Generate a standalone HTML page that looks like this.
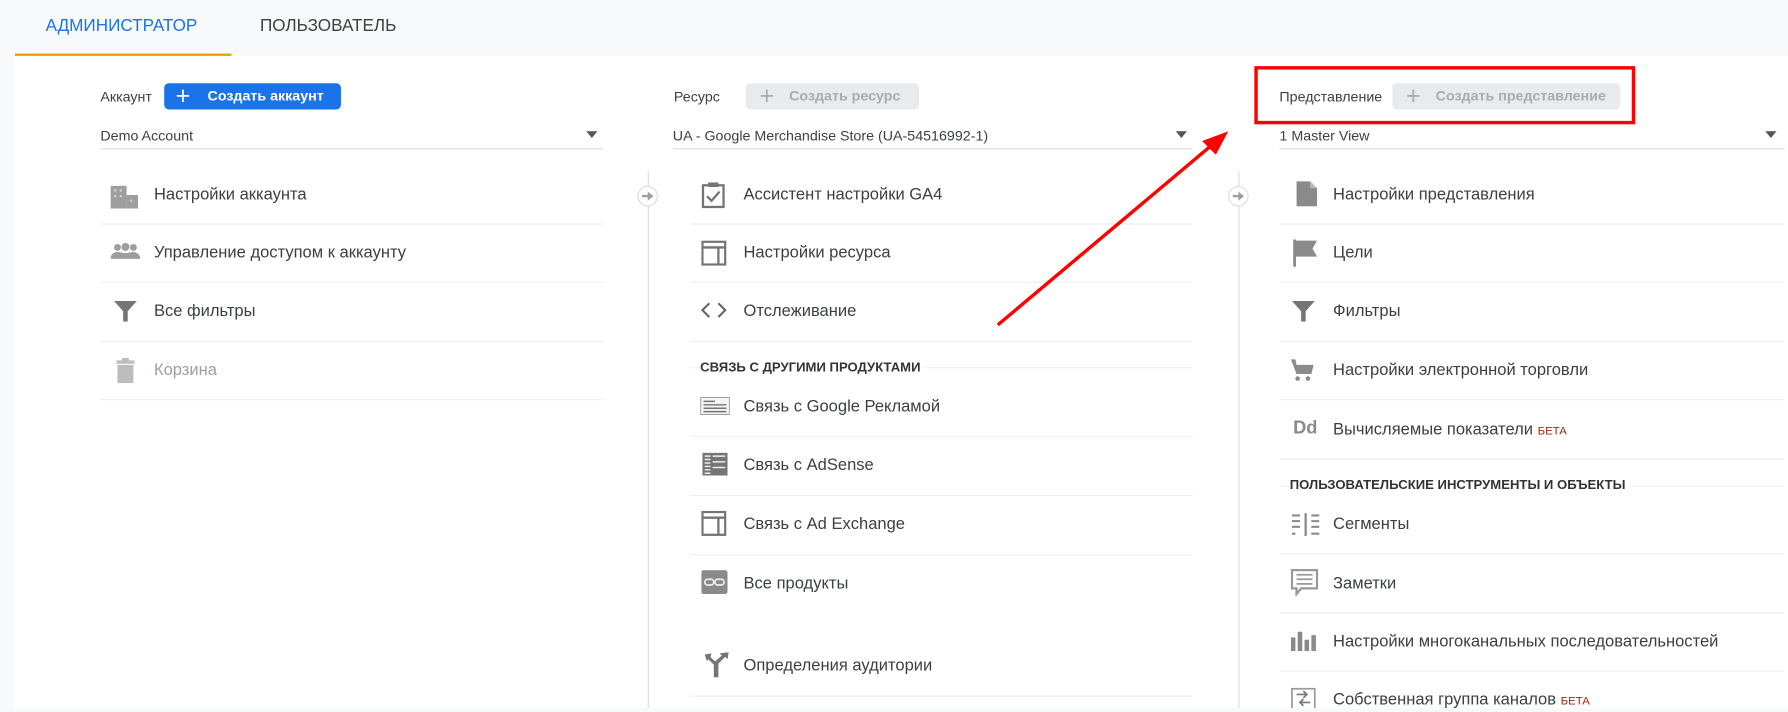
<!DOCTYPE html>
<html><head><meta charset="utf-8"><style>
html,body{margin:0;padding:0;width:1788px;height:712px;overflow:hidden;background:#f8f9fa}
#s{position:absolute;left:0;top:0;width:1568px;height:624px;transform:scale(1.14031);transform-origin:0 0;font-family:"Liberation Sans",sans-serif;color:#3c4043}
.a{position:absolute;white-space:nowrap}
.tab{font-size:15px;top:14px}
.panel{position:absolute;left:13px;top:49px;width:1555px;height:575px;background:#fff}
.lbl{font-size:12.5px;color:#3c4043}
.btn{position:absolute;height:23px;border-radius:4px;font-size:12.5px;font-weight:bold;line-height:23px}
.dd{font-size:12.5px;color:#3c4043;margin-top:1px}
.line{position:absolute;height:1px;background:#dadce0}
.sep{position:absolute;height:1px;background:#eeeeee}
.it{font-size:14.5px;color:#3c4043;margin-top:2px}
.hd{font-size:11.5px;font-weight:bold;color:#333;margin-top:1px}
.beta{font-size:10px;color:#a52714;font-weight:normal}
.vd{position:absolute;width:1px;background:#dadce0;top:150px;height:474px}
.circ{position:absolute;width:16px;height:16px;border:1.5px solid #dadce0;border-radius:50%;background:#fff;top:163px}
svg{position:absolute}
</style></head><body><div id="s">
<div class="a tab" style="left:40px;color:#1a73e8">АДМИНИСТРАТОР</div>
<div class="a tab" style="left:228px;color:#3c4043">ПОЛЬЗОВАТЕЛЬ</div>
<div class="panel"></div>
<div style="position:absolute;left:13px;top:47px;width:190px;height:2px;background:#f29900"></div>

<div class="a lbl" style="left:88px;top:78px">Аккаунт</div>
<div class="btn" style="left:144px;top:73px;width:155px;background:#1a73e8;color:#fff"><span style="position:absolute;left:10px;top:-1px;font-size:22px;font-weight:normal">+</span><span style="position:absolute;left:38px">Создать аккаунт</span></div>
<div class="a dd" style="left:88px;top:111px">Demo Account</div>
<svg style="left:514px;top:115px" width="10" height="6"><path d="M0 0H10L5 6Z" fill="#555"/></svg>
<div class="line" style="left:88px;top:130px;width:441px"></div>

<svg style="left:97px;top:161px" width="26" height="22"><rect x="0" y="2" width="14" height="20" fill="#9e9e9e"/><rect x="14" y="10" width="10" height="12" fill="#9e9e9e"/><g fill="#fff" opacity=".5"><rect x="3" y="5" width="2" height="2"/><rect x="8" y="5" width="2" height="2"/><rect x="3" y="10" width="2" height="2"/><rect x="8" y="10" width="2" height="2"/><rect x="17" y="14" width="2" height="2"/></g></svg>
<div class="a it" style="left:135px;top:161px">Настройки аккаунта</div>
<div class="sep" style="left:88px;top:196px;width:441px"></div>
<svg style="left:97px;top:213px" width="26" height="16"><circle cx="6" cy="4" r="3" fill="#9e9e9e"/><circle cx="13" cy="3.5" r="3.5" fill="#9e9e9e"/><circle cx="20" cy="4" r="3" fill="#9e9e9e"/><path d="M0 14C0 9 4 8 6 8S12 9 13 9 19 8 20 8 26 9 26 14Z" fill="#9e9e9e"/></svg>
<div class="a it" style="left:135px;top:212px">Управление доступом к аккаунту</div>
<div class="sep" style="left:88px;top:247px;width:441px"></div>
<svg style="left:100px;top:264px" width="20" height="18"><path d="M0 0H20L12 9V18H8V9Z" fill="#757575"/></svg>
<div class="a it" style="left:135px;top:263px">Все фильтры</div>
<div class="sep" style="left:88px;top:299px;width:441px"></div>
<svg style="left:102px;top:314px" width="16" height="22"><rect x="0" y="2" width="16" height="3" fill="#bdbdbd"/><rect x="5" y="0" width="6" height="3" fill="#bdbdbd"/><rect x="1" y="6" width="14" height="16" fill="#bdbdbd"/></svg>
<div class="a it" style="left:135px;top:315px;color:#9aa0a6">Корзина</div>
<div class="sep" style="left:88px;top:350px;width:441px"></div>

<div class="vd" style="left:568px"></div>
<div class="circ" style="left:559px"><svg style="left:3px;top:4px" width="10" height="8"><path d="M0 3H5V0L10 4 5 8V5H0Z" fill="#9e9e9e"/></svg></div>
<div class="vd" style="left:1086px"></div>
<div class="circ" style="left:1077px"><svg style="left:3px;top:4px" width="10" height="8"><path d="M0 3H5V0L10 4 5 8V5H0Z" fill="#9e9e9e"/></svg></div>

<div class="a lbl" style="left:591px;top:78px">Ресурс</div>
<div class="btn" style="left:654px;top:73px;width:152px;background:#e8eaed;color:#a8acb0"><span style="position:absolute;left:12px;top:-1px;font-size:22px;font-weight:normal">+</span><span style="position:absolute;left:38px">Создать ресурс</span></div>
<div class="a dd" style="left:590px;top:111px">UA - Google Merchandise Store (UA-54516992-1)</div>
<svg style="left:1031px;top:115px" width="10" height="6"><path d="M0 0H10L5 6Z" fill="#555"/></svg>
<div class="line" style="left:590px;top:130px;width:456px"></div>

<svg style="left:615px;top:159px" width="22" height="24"><rect x="1.5" y="3.5" width="18" height="19" fill="none" stroke="#757575" stroke-width="2"/><rect x="6" y="1" width="9" height="4" fill="#757575"/><path d="M5 13L9 17 16 9" fill="none" stroke="#757575" stroke-width="2"/></svg>
<div class="a it" style="left:652px;top:161px">Ассистент настройки GA4</div>
<div class="sep" style="left:605px;top:196px;width:441px"></div>
<svg style="left:615px;top:211px" width="22" height="22"><rect x="1" y="1" width="20" height="20" fill="none" stroke="#757575" stroke-width="2"/><path d="M1 6H21M15 6V21" stroke="#757575" stroke-width="2"/></svg>
<div class="a it" style="left:652px;top:212px">Настройки ресурса</div>
<div class="sep" style="left:605px;top:247px;width:441px"></div>
<svg style="left:614px;top:265px" width="24" height="14"><path d="M8 1L2 7 8 13M16 1L22 7 16 13" fill="none" stroke="#616161" stroke-width="1.8"/></svg>
<div class="a it" style="left:652px;top:263px">Отслеживание</div>
<div class="sep" style="left:605px;top:299px;width:441px"></div>
<div class="sep" style="left:605px;top:322px;width:441px"></div>
<div class="a hd" style="left:614px;top:316px;background:#fff;padding-right:4px">СВЯЗЬ С ДРУГИМИ ПРОДУКТАМИ</div>
<svg style="left:614px;top:348px" width="26" height="16"><rect x=".5" y=".5" width="28" height="15" fill="#f5f5f5" stroke="#9e9e9e" transform="scale(.9,1)"/><path d="M3 4H13M3 7H23M3 10H23M3 13H23" stroke="#757575" stroke-width="1.3"/></svg>
<div class="a it" style="left:652px;top:347px">Связь с Google Рекламой</div>
<div class="sep" style="left:605px;top:382px;width:441px"></div>
<svg style="left:616px;top:397px" width="22" height="20"><rect width="22" height="20" fill="#757575"/><path d="M9 3H20M9 8H20M9 13H20M2 3H7M2 6H7M2 9H7M2 12H7M2 15H7M2 18H7" stroke="#eee" stroke-width="1.3"/></svg>
<div class="a it" style="left:652px;top:398px">Связь с AdSense</div>
<div class="sep" style="left:605px;top:434px;width:441px"></div>
<svg style="left:615px;top:448px" width="22" height="22"><rect x="1" y="1" width="20" height="20" fill="none" stroke="#757575" stroke-width="2"/><path d="M1 6H21M15 6V21" stroke="#757575" stroke-width="2"/></svg>
<div class="a it" style="left:652px;top:450px">Связь с Ad Exchange</div>
<div class="sep" style="left:605px;top:486px;width:441px"></div>
<svg style="left:615px;top:500px" width="23" height="21"><rect width="23" height="21" rx="2" fill="#8a8a8a"/><rect x="3" y="8" width="8" height="5" rx="2.5" fill="none" stroke="#eee" stroke-width="1.5"/><rect x="12" y="8" width="8" height="5" rx="2.5" fill="none" stroke="#eee" stroke-width="1.5"/></svg>
<div class="a it" style="left:652px;top:502px">Все продукты</div>
<svg style="left:617px;top:572px" width="24" height="22"><path d="M1 2L7 1 6 4 10 8 16 3 14 1 22 0 21 6 19 4 13 10V22H9V11L4 6 3 8Z" fill="#757575"/></svg>
<div class="a it" style="left:652px;top:574px">Определения аудитории</div>
<div class="sep" style="left:605px;top:610px;width:441px"></div>

<div class="a lbl" style="left:1122px;top:78px">Представление</div>
<div class="btn" style="left:1221px;top:73px;width:200px;background:#e8eaed;color:#a8acb0"><span style="position:absolute;left:12px;top:-1px;font-size:22px;font-weight:normal">+</span><span style="position:absolute;left:38px">Создать представление</span></div>
<div style="position:absolute;left:1100px;top:58px;width:328px;height:45px;border:3px solid #ff0000"></div>
<div class="a dd" style="left:1122px;top:111px">1 Master View</div>
<svg style="left:1548px;top:115px" width="10" height="6"><path d="M0 0H10L5 6Z" fill="#555"/></svg>
<div class="line" style="left:1122px;top:130px;width:443px"></div>

<svg style="left:1137px;top:159px" width="18" height="22"><path d="M0 0H12L18 6V22H0Z" fill="#8a8a8a"/><path d="M12 0V6H18" fill="#bbb"/></svg>
<div class="a it" style="left:1169px;top:161px">Настройки представления</div>
<div class="sep" style="left:1122px;top:196px;width:443px"></div>
<svg style="left:1134px;top:210px" width="22" height="24"><rect x="0" y="0" width="2.5" height="24" fill="#8a8a8a"/><path d="M2 1H21L17 8 21 15H2Z" fill="#8a8a8a"/></svg>
<div class="a it" style="left:1169px;top:212px">Цели</div>
<div class="sep" style="left:1122px;top:247px;width:443px"></div>
<svg style="left:1133px;top:264px" width="20" height="18"><path d="M0 0H20L12 9V18H8V9Z" fill="#757575"/></svg>
<div class="a it" style="left:1169px;top:263px">Фильтры</div>
<div class="sep" style="left:1122px;top:299px;width:443px"></div>
<svg style="left:1132px;top:315px" width="20" height="20"><path d="M0 0H4L5 5H20L18 13H5Z" fill="#8a8a8a"/><circle cx="6" cy="17" r="2" fill="#8a8a8a"/><circle cx="15" cy="17" r="2" fill="#8a8a8a"/></svg>
<div class="a it" style="left:1169px;top:315px">Настройки электронной торговли</div>
<div class="sep" style="left:1122px;top:350px;width:443px"></div>
<div class="a" style="left:1134px;top:367px;font-size:16px;font-weight:bold;color:#8a8a8a">Dd</div>
<div class="a it" style="left:1169px;top:367px">Вычисляемые показатели <span class="beta">БЕТА</span></div>
<div class="sep" style="left:1122px;top:402px;width:443px"></div>
<div class="sep" style="left:1122px;top:426px;width:443px"></div>
<div class="a hd" style="left:1131px;top:419px;background:#fff;padding-right:4px">ПОЛЬЗОВАТЕЛЬСКИЕ ИНСТРУМЕНТЫ И ОБЪЕКТЫ</div>
<svg style="left:1133px;top:450px" width="24" height="20"><path d="M0 2H7M0 7H7M0 12H7M0 18H3M17 2H24M17 7H24M17 12H24M17 18H24" stroke="#8a8a8a" stroke-width="1.8"/><path d="M12 0V20" stroke="#8a8a8a" stroke-width="2"/></svg>
<div class="a it" style="left:1169px;top:450px">Сегменты</div>
<div class="sep" style="left:1122px;top:485px;width:443px"></div>
<svg style="left:1132px;top:499px" width="24" height="24"><path d="M1 1H23V17H9L5 22V17H1Z" fill="none" stroke="#999" stroke-width="2"/><path d="M5 5H19M5 9H19M5 13H19" stroke="#999" stroke-width="1.5"/></svg>
<div class="a it" style="left:1169px;top:502px">Заметки</div>
<div class="sep" style="left:1122px;top:537px;width:443px"></div>
<svg style="left:1132px;top:551px" width="24" height="20"><rect x="0" y="8" width="4" height="12" fill="#8a8a8a"/><rect x="6" y="3" width="4" height="17" fill="#8a8a8a"/><rect x="12" y="10" width="4" height="10" fill="#8a8a8a"/><rect x="18" y="6" width="4" height="14" fill="#8a8a8a"/></svg>
<div class="a it" style="left:1169px;top:553px">Настройки многоканальных последовательностей</div>
<div class="sep" style="left:1122px;top:588px;width:443px"></div>
<svg style="left:1132px;top:603px" width="22" height="21"><rect x="1" y="1" width="20" height="22" fill="none" stroke="#999" stroke-width="1.5"/><path d="M5 6H14M11 3L14 6 11 9M17 13H8M11 10L8 13 11 16" fill="none" stroke="#777" stroke-width="1.5"/></svg>
<div class="a it" style="left:1169px;top:604px">Собственная группа каналов <span class="beta">БЕТА</span></div>

<div style="position:absolute;left:0;top:621px;width:1568px;height:3px;background:#f8f9fa"></div>

<svg style="left:0;top:0" width="1568" height="624"><path d="M875 285L1063 127" stroke="#ff0000" stroke-width="3"/><path d="M1075 117L1056 124 1066 134Z" fill="#ff0000" stroke="#ff0000" stroke-width="2"/></svg>
</div></body></html>
